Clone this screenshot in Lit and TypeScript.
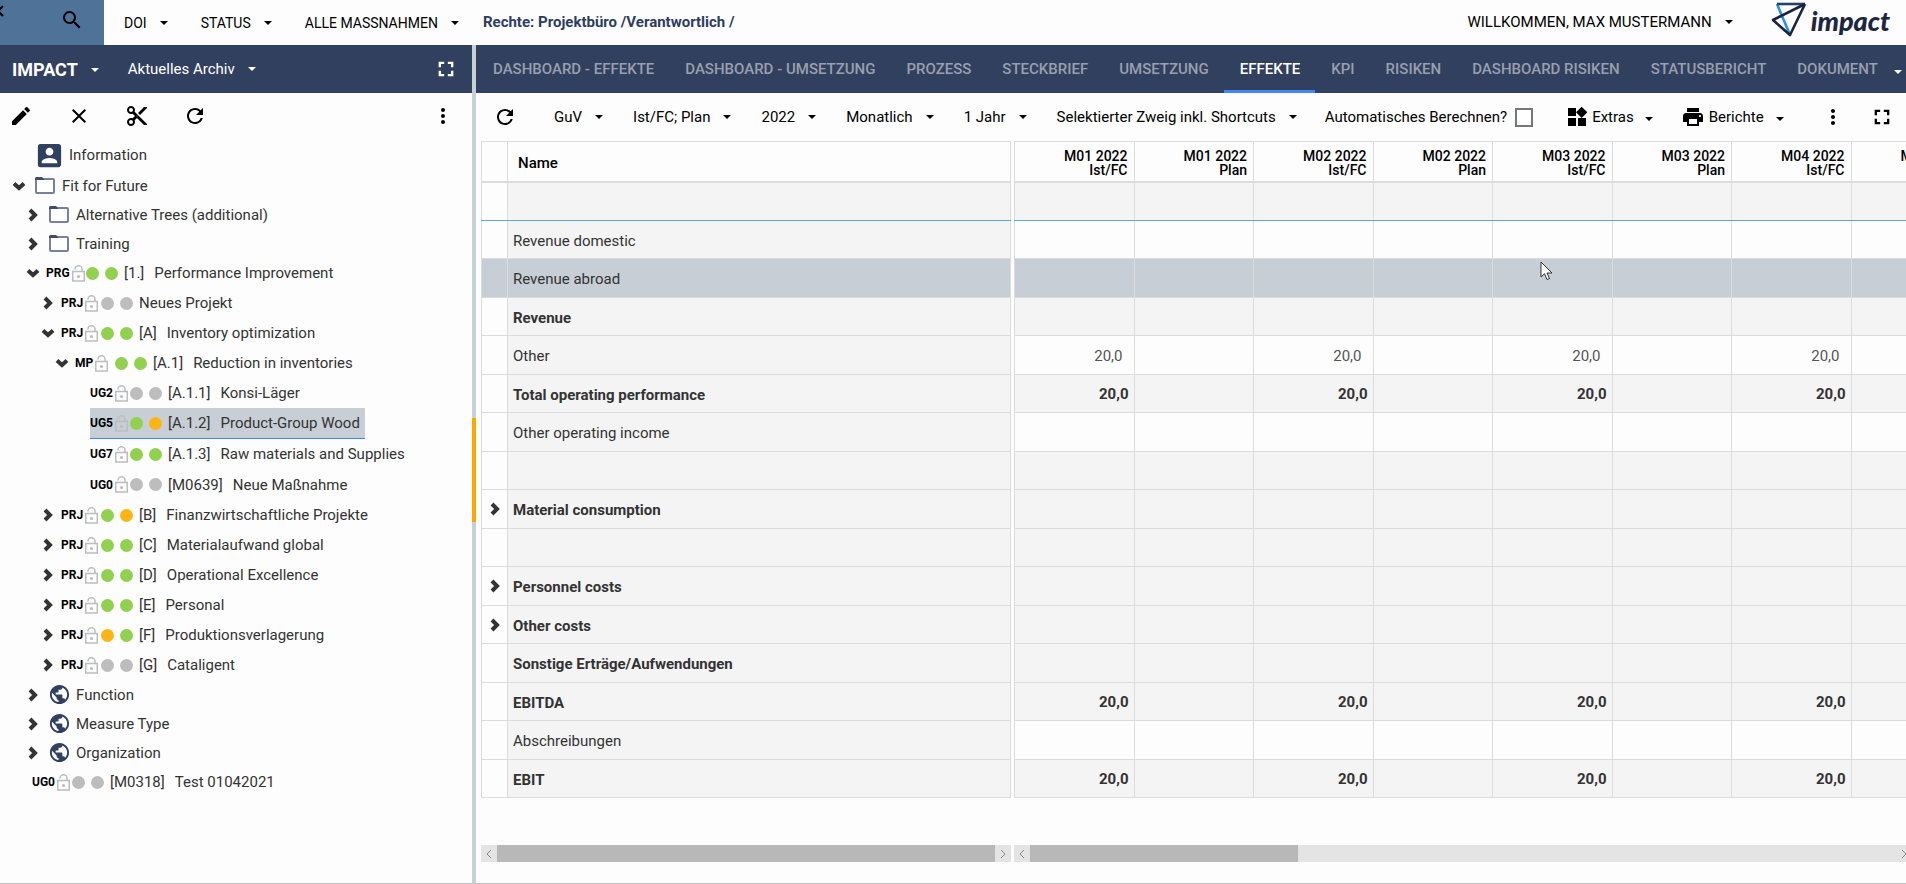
import { LitElement, html, svg, css, nothing } from "lit";
import { customElement, state } from "lit/decorators.js";

type Dot = "g" | "o" | "n";
interface Node {
  level: number;
  open?: boolean;
  closed?: boolean;
  icon?: "folder" | "globe" | "person";
  tag?: string;
  dots?: [Dot, Dot];
  code?: string;
  title: string;
  selected?: boolean;
  last?: boolean;
}

const TREE: Node[] = [
  { level: 0, icon: "person", title: "Information" },
  { level: 0, open: true, icon: "folder", title: "Fit for Future" },
  { level: 1, closed: true, icon: "folder", title: "Alternative Trees (additional)" },
  { level: 1, closed: true, icon: "folder", title: "Training" },
  { level: 1, open: true, tag: "PRG", dots: ["g", "g"], code: "[1.]", title: "Performance Improvement" },
  { level: 2, closed: true, tag: "PRJ", dots: ["n", "n"], title: "Neues Projekt" },
  { level: 2, open: true, tag: "PRJ", dots: ["g", "g"], code: "[A]", title: "Inventory optimization" },
  { level: 3, open: true, tag: "MP", dots: ["g", "g"], code: "[A.1]", title: "Reduction in inventories" },
  { level: 4, tag: "UG2", dots: ["n", "n"], code: "[A.1.1]", title: "Konsi-Läger" },
  { level: 4, tag: "UG5", dots: ["g", "o"], code: "[A.1.2]", title: "Product-Group Wood", selected: true },
  { level: 4, tag: "UG7", dots: ["g", "g"], code: "[A.1.3]", title: "Raw materials and Supplies" },
  { level: 4, tag: "UG0", dots: ["n", "n"], code: "[M0639]", title: "Neue Maßnahme", last: true },
  { level: 2, closed: true, tag: "PRJ", dots: ["g", "o"], code: "[B]", title: "Finanzwirtschaftliche Projekte" },
  { level: 2, closed: true, tag: "PRJ", dots: ["g", "g"], code: "[C]", title: "Materialaufwand global" },
  { level: 2, closed: true, tag: "PRJ", dots: ["g", "g"], code: "[D]", title: "Operational Excellence" },
  { level: 2, closed: true, tag: "PRJ", dots: ["g", "g"], code: "[E]", title: "Personal" },
  { level: 2, closed: true, tag: "PRJ", dots: ["o", "g"], code: "[F]", title: "Produktionsverlagerung" },
  { level: 2, closed: true, tag: "PRJ", dots: ["n", "n"], code: "[G]", title: "Cataligent" },
  { level: 1, closed: true, icon: "globe", title: "Function" },
  { level: 1, closed: true, icon: "globe", title: "Measure Type" },
  { level: 1, closed: true, icon: "globe", title: "Organization" },
  { level: 0, tag: "UG0", dots: ["n", "n"], code: "[M0318]", title: "Test 01042021" },
];

const TABS = [
  "DASHBOARD - EFFEKTE", "DASHBOARD - UMSETZUNG", "PROZESS", "STECKBRIEF", "UMSETZUNG", "EFFEKTE",
  "KPI", "RISIKEN", "DASHBOARD RISIKEN", "STATUSBERICHT", "DOKUMENT",
];

interface Line {
  name: string;
  bold?: boolean;
  input?: boolean;
  value?: string;
  expand?: boolean;
  selected?: boolean;
  focus?: boolean;
}

const LINES: Line[] = [
  { name: "", focus: true },
  { name: "Revenue domestic", input: true },
  { name: "Revenue abroad", selected: true },
  { name: "Revenue", bold: true },
  { name: "Other", input: true, value: "20,0" },
  { name: "Total operating performance", bold: true, value: "20,0" },
  { name: "Other operating income", input: true },
  { name: "" },
  { name: "Material consumption", bold: true, expand: true },
  { name: "" },
  { name: "Personnel costs", bold: true, expand: true },
  { name: "Other costs", bold: true, expand: true },
  { name: "Sonstige Erträge/Aufwendungen", bold: true },
  { name: "EBITDA", bold: true, value: "20,0" },
  { name: "Abschreibungen", input: true },
  { name: "EBIT", bold: true, value: "20,0" },
];

const COLUMNS = ["M01 2022", "M02 2022", "M03 2022", "M04 2022"].flatMap((m) => [
  { month: m, kind: "Ist/FC" },
  { month: m, kind: "Plan" },
]);

const PATHS: Record<string, string> = {
  search: "M15.5 14h-.79l-.28-.27A6.471 6.471 0 0 0 16 9.5 6.5 6.5 0 1 0 9.5 16c1.61 0 3.09-.59 4.23-1.57l.27.28v.79l5 4.99L20.49 19l-4.99-5zm-6 0C7.01 14 5 11.99 5 9.5S7.01 5 9.5 5 14 7.01 14 9.5 11.99 14 9.5 14z",
  edit: "M3 17.25V21h3.75L17.81 9.94l-3.75-3.75L3 17.25zM20.71 7.04a.996.996 0 0 0 0-1.41l-2.34-2.34a.996.996 0 0 0-1.41 0l-1.83 1.83 3.75 3.75 1.83-1.83z",
  close: "M19 6.41 17.59 5 12 10.59 6.41 5 5 6.41 10.59 12 5 17.59 6.41 19 12 13.41 17.59 19 19 17.59 13.41 12z",
  cut: "M9.64 7.64c.23-.5.36-1.05.36-1.64 0-2.21-1.79-4-4-4S2 3.79 2 6s1.79 4 4 4c.59 0 1.14-.13 1.64-.36L10 12l-2.36 2.36C7.14 14.13 6.59 14 6 14c-2.21 0-4 1.79-4 4s1.79 4 4 4 4-1.79 4-4c0-.59-.13-1.14-.36-1.64L12 14l7 7h3v-1L9.64 7.64zM6 8c-1.1 0-2-.89-2-2s.9-2 2-2 2 .89 2 2-.9 2-2 2zm0 12c-1.1 0-2-.89-2-2s.9-2 2-2 2 .89 2 2-.9 2-2 2zm6-7.5c-.28 0-.5-.22-.5-.5s.22-.5.5-.5.5.22.5.5-.22.5-.5.5zM19 3l-6 6 2 2 7-7V3z",
  refresh: "M17.65 6.35A7.958 7.958 0 0 0 12 4c-4.42 0-7.99 3.58-7.99 8s3.57 8 7.99 8c3.73 0 6.84-2.55 7.73-6h-2.08A5.99 5.99 0 0 1 12 18c-3.31 0-6-2.69-6-6s2.69-6 6-6c1.66 0 3.14.69 4.22 1.78L13 11h7V4l-2.35 2.35z",
  more: "M12 8c1.1 0 2-.9 2-2s-.9-2-2-2-2 .9-2 2 .9 2 2 2zm0 2c-1.1 0-2 .9-2 2s.9 2 2 2 2-.9 2-2-.9-2-2-2zm0 6c-1.1 0-2 .9-2 2s.9 2 2 2 2-.9 2-2-.9-2-2-2z",
  full: "M4 4h6v2.500H6.500V10H4V4zm10 0h6v6h-2.500V6.500H14V4zM4 14h2.500v3.500H10V20H4v-6zm13.500 0H20v6h-6v-2.500h3.500V14z",
  widgets: "M13 13v8h8v-8h-8zM3 21h8v-8H3v8zM3 3v8h8V3H3zm13.660-1.310L11 7.340 16.660 13l5.660-5.660-5.660-5.650z",
  print: "M19 8H5c-1.66 0-3 1.34-3 3v6h4v4h12v-4h4v-6c0-1.66-1.34-3-3-3zm-3 11H8v-5h8v5zm3-7c-.55 0-1-.45-1-1s.45-1 1-1 1 .45 1 1-.45 1-1 1zm-1-9H6v4h12V3z",
  person: "M3 5v14a2 2 0 0 0 2 2h14c1.100 0 2-.9 2-2V5c0-1.100-.9-2-2-2H5a2 2 0 0 0-2 2zm12 4c0 1.660-1.340 3-3 3s-3-1.340-3-3 1.340-3 3-3 3 1.340 3 3zm-9 8c0-2 4-3.100 6-3.100s6 1.100 6 3.100v1H6v-1z",
  globe: "M12 2C6.480 2 2 6.480 2 12s4.480 10 10 10 10-4.480 10-10S17.520 2 12 2zm-1 17.930c-3.950-.49-7-3.850-7-7.930 0-.62.080-1.210.210-1.790L9 15v1c0 1.100.9 2 2 2v1.930zm6.900-2.540A1.990 1.990 0 0 0 16 16h-1v-3c0-.55-.45-1-1-1H8v-2h2c.55 0 1-.45 1-1V7h2c1.100 0 2-.9 2-2v-.41c2.930 1.190 5 4.060 5 7.410 0 2.080-.8 3.970-2.100 5.390z",
};

const icon = (name: string, size = 24) => html`<svg
  class="icon" width=${size} height=${size} viewBox="0 0 24 24" aria-hidden="true"
><path fill="currentColor" d=${PATHS[name]} /></svg>`;

const folder = html`<svg class="icon" width="20" height="17" viewBox="0 0 20 17" aria-hidden="true">
  <rect x="1" y="2" width="18" height="14" rx="1" fill="#fff" stroke="#76819a" stroke-width="2" />
  <path d="M0 3V1.500Q0 0 1.500 0H7l2 2v1z" fill="#3f4c6b" />
</svg>`;

const lock = html`<svg class="icon" width="13" height="17" viewBox="0 0 13 17" aria-hidden="true">
  <path d="M3 4.500V4a3.300 3 0 0 1 7 0v3" fill="none" stroke="#bdbdbd" stroke-width="1.500" />
  <rect x=".75" y="6.500" width="11.500" height="9.500" fill="none" stroke="#bdbdbd" stroke-width="1.500" />
  <circle cx="6.500" cy="11.500" r="1.600" fill="#bdbdbd" />
</svg>`;

const chevron = (down: boolean) => html`<svg
  class="icon" width="14" height="14" viewBox="0 0 14 14" aria-hidden="true"
>${down
  ? svg`<path d="M2 4.500l5 4.500 5-4.500" fill="none" stroke="#333" stroke-width="4" />`
  : svg`<path d="M4 2l5 5-5 5" fill="none" stroke="#333" stroke-width="4" />`}</svg>`;

const caret = html`<svg class="icon caret" width="8" height="4" viewBox="0 0 8 4" aria-hidden="true"
><path d="M0 0h8L4 4z" fill="currentColor" /></svg>`;

const thin = (left: boolean) => html`<svg class="icon" width="6" height="10" viewBox="0 0 6 10" aria-hidden="true"
><path d=${left ? "M5 1L1 5l4 4" : "M1 1l4 4-4 4"} fill="none" stroke="#8a8a8a" /></svg>`;

@customElement("app-root")
export class AppRoot extends LitElement {
  @state() private tab = "EFFEKTE";

  static styles = css`
    :host {
      display: flex;
      flex-direction: column;
      height: 100vh;
      overflow: hidden;
      box-sizing: border-box;
      border-bottom: 1px solid #c4c4c4;
      background: #fdfdfd;
      color: #333;
      font: 15px/20px Roboto, sans-serif;
    }
    * { box-sizing: border-box; }
    button {
      display: inline-flex;
      align-items: center;
      padding: 0;
      border: 0;
      background: none;
      color: inherit;
      font: inherit;
      white-space: nowrap;
    }
    .icon { display: block; flex: none; }
    .menu { gap: 13px; }

    .top { display: flex; align-items: center; height: 45px; flex: none; color: #000; }
    .finder {
      display: flex; align-items: flex-start; justify-content: space-between;
      width: 104px; height: 45px; padding: 5px 20px 0 0; background: #4f7299; overflow: hidden;
    }
    .finder .back { margin-left: -4px; }
    .finder .find { padding-top: 3px; }
    .filters { display: flex; gap: 33px; padding-left: 20px; font-size: 14px; }
    .rights { margin-left: 24px; color: #2e3d5e; font-weight: 700; padding-bottom: 2px; }
    .user { margin-left: auto; padding-bottom: 2px; }
    .logo { display: flex; align-items: center; margin: 0 16px 0 38px; height: 45px; padding-bottom: 6px; gap: 4px; }
    .word { font: italic 900 27px/32px Lato, sans-serif; color: #1d2640; padding-top: 2px; }

    .body { display: flex; flex: 1; min-height: 0; }
    .side { display: flex; flex-direction: column; width: 472px; flex: none; }
    .sidebar {
      display: flex; align-items: center; height: 48px; flex: none;
      padding: 0 15px 0 12px; background: #32405f; color: #fff;
    }
    .brand { font-size: 18px; font-weight: 700; margin-right: 29px; padding-top: 2px; }
    .grow { margin-left: auto; }
    .tools { display: flex; align-items: center; height: 46px; flex: none; padding: 0 17px 0 9px; gap: 34px; color: #000; }
    .tree { list-style: none; margin: 0; padding: 0; }
    .node { display: flex; align-items: center; height: 30px; white-space: nowrap; }
    .node.iconic { height: 29px; }
    .node.person { height: 32px; }
    .node.last { height: 31px; }
    .node.selected { height: 31px; }
    .twist { width: 20px; justify-content: center; margin-right: 3px; flex: none; }
    .label { display: flex; align-items: center; height: 100%; color: inherit; text-decoration: none; }
    .selected .label { background: #c7ced5; border-bottom: 1px solid #4285f4; padding-right: 5px; }
    .tagbox { display: flex; align-items: center; width: 40px; gap: 2px; color: #000; font-size: 12px; font-weight: 700; }
    .dot { width: 13px; height: 13px; border-radius: 50%; margin-right: 6px; }
    .dot.g { background: #92d050; }
    .dot.o { background: #fdb515; }
    .dot.n { background: #bdbdbd; }
    .code { margin-right: 10px; }
    .pic { margin: 0 7px 0 3px; color: #32405f; }
    .pic.globe { margin: 0 5px 0 2px; }
    .pic.person { margin: 0 4px 0 2px; }

    .split {
      width: 4px; flex: none; background: #c7d0d5;
      display: flex; align-items: center;
    }
    .grip { width: 4px; height: 104px; background: #ffa500; margin-top: 12px; }

    .main { flex: 1; min-width: 0; display: flex; flex-direction: column; }
    .tabs { display: flex; align-items: stretch; height: 48px; flex: none; background: #32405f; padding-right: 4px; overflow: hidden; }
    .tab { flex: none; padding: 0 15px 0 16px; border-bottom: 3px solid transparent; border-top: 2px solid transparent; color: #989fae; font-weight: 500; height: 48px; }
    .tab:first-child { padding-left: 17px; }
    .tab:nth-last-child(2) { padding-right: 4px; }
    .tab.on { color: #fff; border-bottom-color: #4285f4; }
    .tabmore { margin-left: auto; color: #fff; padding-top: 5px; }

    .bar { display: flex; align-items: center; height: 48px; flex: none; padding: 0 13px 0 17px; color: #000; }
    .bar .drops { display: flex; gap: 30px; margin-left: 37px; }
    .auto { display: flex; align-items: center; gap: 8px; margin-left: 28px; white-space: nowrap; }
    .auto input { appearance: none; width: 18px; height: 19px; margin: 0; border: 2px solid #777; background: #fff; }
    .bar .extras { margin-left: 32px; gap: 3px; }
    .bar .reports { margin-left: 28px; gap: 4px; }
    .extras .caret, .reports .caret { margin: 3px 0 0 8px; }
    .bar .dots { margin-left: auto; }
    .bar .full { margin-left: 26px; }

    .grid { display: flex; gap: 3px; padding-left: 5px; flex: none; }
    .left { width: 530px; flex: none; }
    .right { flex: 1; min-width: 0; overflow: hidden; }
    table { border-collapse: collapse; table-layout: fixed; }
    .left table { width: 530px; }
    .right table { width: 957px; }
    .gut { width: 26px; }
    th, td { border: 1px solid #dcdcdc; padding: 0; font-weight: 400; }
    thead th { height: 40px; color: #000; font-weight: 500; font-size: 14px; line-height: 14px; border-bottom-width: 2px; background: #fdfdfd; padding-top: 3px; }
    thead .name { text-align: left; padding-left: 10px; font-size: 15px; }
    thead .col { text-align: right; padding-right: 6px; }
    tbody tr { height: 38px; }
    tbody tr:nth-child(odd) { height: 39px; }
    tbody th { text-align: left; padding: 2px 0 0 5px; background: #f4f4f4; }
    tbody td { background: #f4f4f4; text-align: right; padding: 1px 5px 0 0; }
    tbody .cellgut { background: #fdfdfd; padding: 0 0 0 6px; }
    .cellgut button { display: flex; }
    .input .num { background: #fdfdfd; padding-right: 11px; color: #555; }
    .bold th, .bold td { font-weight: 700; }
    tbody .picked th, tbody .picked td { background: #c7ced5; }
    .focus th, .focus td { border-bottom-color: #5aa7e8; }

    .scrolls { display: flex; gap: 3px; padding: 0 0 0 5px; margin-top: auto; margin-bottom: 21px; flex: none; }
    .scroll { display: flex; height: 17px; background: #e4e4e4; }
    .scroll.a { width: 530px; }
    .scroll.b { flex: 1; min-width: 0; margin-right: -6px; }
    .scroll button { width: 16px; justify-content: center; flex: none; }
    .track { flex: 1; display: flex; }
    .thumb { background: #b8b8b8; }
    .cursor { position: absolute; left: 1540px; top: 261px; }
  `;

  private drop(label: string, cls = "") {
    return html`<button class="menu ${cls}">${label}${caret}</button>`;
  }

  private node(n: Node) {
    const kind = n.icon === "person" ? "person" : n.icon ? "iconic" : "";
    return html`<li
      class="node ${kind} ${n.selected ? "selected" : ""} ${n.last ? "last" : ""}"
      style="padding-left:${9 + Math.floor(n.level * 14.5)}px"
    >
      ${n.open || n.closed
        ? html`<button class="twist" aria-label=${n.open ? "Zuklappen" : "Aufklappen"}>${chevron(!!n.open)}</button>`
        : html`<span class="twist"></span>`}
      <a class="label" href="#">
        ${n.icon
          ? html`<span class="pic ${n.icon}">${n.icon === "folder" ? folder : n.icon === "globe" ? icon("globe", 23) : icon("person", 31)}</span>`
          : nothing}
        ${n.tag ? html`<span class="tagbox">${n.tag}${lock}</span>` : nothing}
        ${n.dots ? n.dots.map((d) => html`<span class="dot ${d}"></span>`) : nothing}
        ${n.code ? html`<span class="code">${n.code}</span>` : nothing}
        <span>${n.title}</span>
      </a>
    </li>`;
  }

  private rowClass(l: Line) {
    return [l.bold && "bold", l.selected && "picked", l.focus && "focus", l.input && "input"].filter(Boolean).join(" ");
  }

  render() {
    return html`
      <header class="top">
        <div class="finder">
          <button class="back" aria-label="Zurück"><svg class="icon" width="8" height="12" viewBox="0 0 8 12"><path d="M7 1L2 6l5 5" fill="none" stroke="#000" stroke-width="2" /></svg></button>
          <button class="find" aria-label="Suchen">${icon("search")}</button>
        </div>
        <nav class="filters">${["DOI", "STATUS", "ALLE MASSNAHMEN"].map((x) => this.drop(x))}</nav>
        <span class="rights">Rechte: Projektbüro /Verantwortlich /</span>
        ${this.drop("WILLKOMMEN, MAX MUSTERMANN", "user")}
        <div class="logo">
          <svg class="icon" width="36" height="35" viewBox="0 0 36 35" aria-hidden="true">
            <g fill="none" stroke-linejoin="round" stroke-width="2.600">
              <path d="M6 2L19 33" stroke="#2f8fe8" />
              <path d="M6 2H34" stroke="#24406e" />
              <path d="M34 2L2 18l17 15L34 2" stroke="#1b2340" />
            </g>
          </svg>
          <span class="word">impact</span>
        </div>
      </header>
      <div class="body">
        <aside class="side">
          <div class="sidebar">
            ${this.drop("IMPACT", "brand")} ${this.drop("Aktuelles Archiv")}
            <button class="grow" aria-label="Vollbild">${icon("full", 22)}</button>
          </div>
          <div class="tools">
            <button aria-label="Bearbeiten">${icon("edit")}</button>
            <button aria-label="Löschen">${icon("close")}</button>
            <button aria-label="Ausschneiden">${icon("cut")}</button>
            <button aria-label="Aktualisieren">${icon("refresh")}</button>
            <button class="grow" aria-label="Mehr">${icon("more")}</button>
          </div>
          <ul class="tree">${TREE.map((n) => this.node(n))}</ul>
        </aside>
        <div class="split"><div class="grip"></div></div>
        <main class="main">
          <nav class="tabs">
            ${TABS.map((t) => html`<button class="tab ${t === this.tab ? "on" : ""}" @click=${() => (this.tab = t)}>${t}</button>`)}
            <button class="tabmore" aria-label="Weitere">${caret}</button>
          </nav>
          <div class="bar">
            <button aria-label="Aktualisieren">${icon("refresh")}</button>
            <div class="drops">
              ${["GuV", "Ist/FC; Plan", "2022", "Monatlich", "1 Jahr", "Selektierter Zweig inkl. Shortcuts"].map((x) => this.drop(x))}
            </div>
            <label class="auto">Automatisches Berechnen?<input type="checkbox" /></label>
            <button class="extras">${icon("widgets")}Extras${caret}</button>
            <button class="reports">${icon("print")}Berichte${caret}</button>
            <button class="dots" aria-label="Mehr">${icon("more")}</button>
            <button class="full" aria-label="Vollbild">${icon("full", 22)}</button>
          </div>
          <div class="grid">
            <div class="left">
              <table>
                <colgroup><col class="gut" /><col /></colgroup>
                <thead><tr><th></th><th class="name">Name</th></tr></thead>
                <tbody>
                  ${LINES.map((l) => html`<tr class=${this.rowClass(l)}>
                    <td class="cellgut">${l.expand ? html`<button aria-label="Aufklappen">${chevron(false)}</button>` : nothing}</td>
                    <th scope="row">${l.name}</th>
                  </tr>`)}
                </tbody>
              </table>
            </div>
            <div class="right">
              <table>
                <thead><tr>${COLUMNS.map((c) => html`<th class="col">${c.month}<br />${c.kind}</th>`)}</tr></thead>
                <tbody>
                  ${LINES.map((l) => html`<tr class=${this.rowClass(l)}>
                    ${COLUMNS.map((c) => html`<td class="num">${l.value && c.kind !== "Plan" ? l.value : nothing}</td>`)}
                  </tr>`)}
                </tbody>
              </table>
            </div>
          </div>
          <div class="scrolls">
            <div class="scroll a">
              <button aria-label="Nach links">${thin(true)}</button>
              <div class="track"><div class="thumb" style="width:100%"></div></div>
              <button aria-label="Nach rechts">${thin(false)}</button>
            </div>
            <div class="scroll b">
              <button aria-label="Nach links">${thin(true)}</button>
              <div class="track"><div class="thumb" style="width:31%"></div></div>
              <button aria-label="Nach rechts">${thin(false)}</button>
            </div>
          </div>
        </main>
      </div>
      <svg class="cursor" width="13" height="20" viewBox="0 0 13 20" aria-hidden="true">
        <path d="M1 1v15l3.500-3.300L7 18.500l2.500-1L7 12h5z" fill="#fff" stroke="#333" />
      </svg>
    `;
  }
}
